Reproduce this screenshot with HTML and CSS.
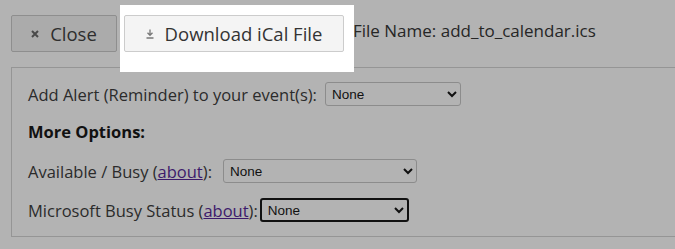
FILE: index.html
```html
<html>
<head>
<title>Add to Calendar</title>
<link rel="stylesheet" href="styles.css">
</head>
<body>
<div class="toolbar">
  <button type="button" class="btn btn-close"><svg class="ico" width="8" height="8" viewBox="0 0 8 8"><path d="M1 1L7 7M7 1L1 7" stroke="#4a4a4a" stroke-width="2"/></svg>Close</button>
  <span class="spotlight">
    <button type="button" class="btn btn-download"><svg class="ico ico-dl" width="8" height="10" viewBox="0 0 8 10"><path d="M4 0.5V6M1.5 3.8L4 6.3L6.5 3.8M0.5 9H7.5" stroke="#777" stroke-width="1.3" fill="none"/></svg>Download iCal File</button>
  </span>
  <span class="filename">File Name: add_to_calendar.ics</span>
</div>

<div class="panel">
  <div class="row row-first">
    <label>Add Alert (Reminder) to your event(s):</label>
    <select class="sel sel-alert"><option>None</option></select>
  </div>
  <div class="heading">More Options:</div>
  <div class="row row-busy">
    <label>Available / Busy (<a href="#">about</a>):</label>
    <select class="sel sel-busy"><option>None</option></select>
  </div>
  <div class="row row-ms">
    <label>Microsoft Busy Status (<a href="#">about</a>):</label>
    <select class="sel sel-ms"><option>None</option></select>
  </div>
</div>
</body>
</html>
```

FILE: styles.css
```css
body {
  margin: 0;
  padding: 15px 10px 0 11px;
  background: #b3b3b3;
  color: #2b2b2b;
  font-family: "Open Sans", Lato, sans-serif;
  font-size: 16.5px;
}
.toolbar { display: flex; align-items: center; height: 37px; }
.btn {
  display: flex;
  align-items: center;
  justify-content: center;
  height: 37px;
  font-family: "Open Sans", sans-serif;
  font-size: 18.5px;
  border-radius: 2px;
  padding: 0;
  cursor: pointer;
}
.btn-close {
  width: 106px;
  background: #ababab;
  border: 1px solid #8e8e8e;
  color: #2e2e2e;
}
.btn-download {
  width: 220px;
  background: #f4f4f4;
  border: 1px solid #cccccc;
  color: #333;
}
.ico { margin-right: 11px; }
.ico-dl { margin-right: 11px; }
.spotlight {
  position: relative;
  z-index: 2;
  display: flex;
  background: #fff;
  margin: -10px 0 -20px 3px;
  padding: 10px 10px 20px 4px;
}
.filename { color: #262626; font-size: 17px; margin-left: -1px; position: relative; top: -3px; }

.panel {
  margin-top: 15px;
  width: 653px;
  border: 1px solid #959595;
  padding: 14px 0 14px 16px;
}
.row { display: flex; align-items: center; height: 24px; }
.row label { margin-right: 5px; }
.row-first label { margin-right: 8px; }
.row-busy label { margin-right: 11px; }
.row-ms label { margin-right: 2px; }
.heading { font-weight: bold; margin: 16px 0 17px; line-height: 20px; color: #111; }
.row-ms { margin-top: 15px; }
a { color: #3d1a6b; }
.sel {
  height: 24px;
  font-family: Arial, "Liberation Sans", sans-serif;
  font-size: 13.5px;
  color: #111;
  background: #b3b3b3;
  border: 1px solid #8c8c8c;
  border-radius: 3px;
  padding: 0 2px;
}
.sel-alert { width: 136px; }
.sel-busy { width: 194px; }
.sel-ms { width: 149px; border: 2px solid #111; border-radius: 3px; }
```
